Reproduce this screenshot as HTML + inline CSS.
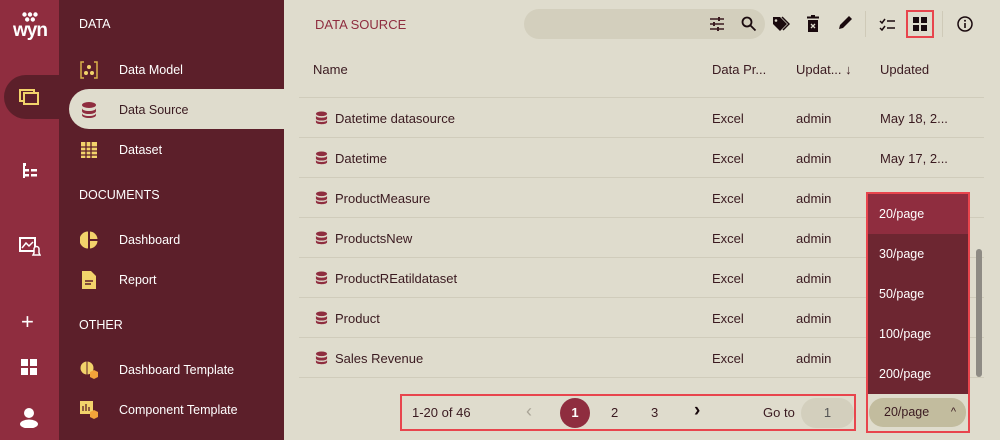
<!DOCTYPE html><html><head><style>
*{box-sizing:border-box;margin:0;padding:0}
body{width:1000px;height:440px;overflow:hidden;background:#dfdccd;font-family:"Liberation Sans",sans-serif;font-size:13px;color:#3a1a20;position:relative}
.abs{position:absolute}
.rail{left:0;top:0;width:59px;height:440px;background:#8f2d3f}
.side{left:59px;top:0;width:225px;height:440px;background:#5c1f2a;color:#fff}
.sec{position:absolute;left:20px;font-size:12.5px}
.it{position:absolute;left:60px;font-size:12.5px}
.ic{position:absolute;left:21px;width:18px;height:18px}
.row{position:absolute;left:299px;width:685px;height:40px;border-top:1px solid #d0ccbb}
.row span{position:absolute;top:13px}
.row svg{position:absolute;left:16px;top:13px}
.dd{position:absolute;left:868px;width:100px;color:#fff;font-size:12.5px;padding-left:11px;height:40px;line-height:40px}
</style></head><body>
<svg width="0" height="0" style="position:absolute"><defs><symbol id="db" viewBox="0 0 14 14"><ellipse cx="7" cy="2.5" rx="6" ry="2.5" fill="#8f2d3f"/><path d="M1 4.5c0 3 12 3 12 0v3c0 3-12 3-12 0zM1 9c0 3 12 3 12 0v2.5c0 3-12 3-12 0z" fill="#8f2d3f"/></symbol></defs></svg>
<div class="abs rail"></div>
<svg class="abs" style="left:22px;top:12px" width="16" height="10" fill="#fff"><circle cx="2.5" cy="2.5" r="2.2"/><circle cx="8" cy="2.5" r="2.2"/><circle cx="13.5" cy="2.5" r="2.2"/><circle cx="5.2" cy="7.5" r="2.2"/><circle cx="10.8" cy="7.5" r="2.2"/></svg>
<div class="abs" style="left:8px;top:20px;width:44px;color:#fff;font-weight:bold;font-size:19px;text-align:center;letter-spacing:-1px">wyn</div>
<div class="abs" style="left:4px;top:75px;width:60px;height:44px;background:#5c1f2a;border-radius:22px 0 0 22px"></div>
<svg class="abs" style="left:19px;top:89px" width="20" height="16"><rect x="1" y="1" width="14" height="11" fill="none" stroke="#f2d36b" stroke-width="2"/><rect x="5" y="4" width="14" height="11" fill="#5c1f2a" stroke="#f2d36b" stroke-width="2"/></svg>
<svg class="abs" style="left:23px;top:163px" width="14" height="15" fill="#fff"><rect x="0" y="0" width="3" height="3"/><rect x="0" y="0" width="2" height="15"/><rect x="0" y="6" width="6" height="2.5"/><rect x="0" y="11" width="6" height="2.5"/><rect x="8" y="6" width="6" height="2.5"/><rect x="8" y="11" width="6" height="2.5"/></svg>
<svg class="abs" style="left:19px;top:237px" width="22" height="20"><rect x="1" y="1" width="15" height="13" fill="none" stroke="#fff" stroke-width="2"/><path d="M3 11l4-5 3 3 4-4" stroke="#fff" fill="none" stroke-width="1.5"/><path d="M14 18h7l-1-2v-4a2.5 2.5 0 0 0-5 0v4z" fill="#8f2d3f" stroke="#fff" stroke-width="1.5"/></svg>
<div class="abs" style="left:21px;top:311px;color:#fff;font-size:22px;line-height:22px">+</div>
<svg class="abs" style="left:21px;top:359px" width="16" height="16" fill="#fff"><rect width="7" height="7"/><rect x="9" width="7" height="7"/><rect y="9" width="7" height="7"/><rect x="9" y="9" width="7" height="7"/></svg>
<svg class="abs" style="left:20px;top:407px" width="18" height="21" fill="#fff"><circle cx="9" cy="6" r="5"/><ellipse cx="9" cy="17" rx="9" ry="4.5"/></svg>

<div class="abs side">
<div class="sec" style="top:17px">DATA</div>
<svg class="ic" style="top:61px" viewBox="0 0 18 18"><path d="M4 1H1v16h3M14 1h3v16h-3" fill="none" stroke="#d9b24a" stroke-width="1.5"/><circle cx="9" cy="6" r="2" fill="#f2d36b"/><circle cx="6" cy="12" r="2" fill="#f2d36b"/><circle cx="12" cy="12" r="2" fill="#f2d36b"/></svg>
<div class="it" style="top:63px">Data Model</div>
<div class="abs" style="left:10px;top:89px;width:215px;height:40px;background:#dfdccd;border-radius:20px 0 0 20px"></div>
<svg class="ic" style="top:101px" viewBox="0 0 18 18" fill="#8f2d3f"><ellipse cx="9" cy="4" rx="7" ry="3"/><path d="M2 7c0 4 14 4 14 0v3c0 4-14 4-14 0zM2 12c0 4 14 4 14 0v2c0 4-14 4-14 0z"/></svg>
<div class="it" style="top:103px;color:#3a1a20">Data Source</div>
<svg class="ic" style="top:141px" viewBox="0 0 18 18"><rect x="1" y="1" width="16" height="16" fill="#f2d36b"/><path d="M1 6h16M1 10h16M1 14h16M6 1v16M11 1v16" stroke="#5c1f2a" stroke-width="1.3"/></svg>
<div class="it" style="top:143px">Dataset</div>
<div class="sec" style="top:188px">DOCUMENTS</div>
<svg class="ic" style="top:231px" viewBox="0 0 18 18" fill="#f2d36b"><path d="M8 0.5A8.5 8.5 0 0 0 8 17.5z"/><path d="M10 0.5A8 8 0 0 1 17.5 8H10zM10 10h7.5A8 8 0 0 1 10 17.5z"/></svg>
<div class="it" style="top:233px">Dashboard</div>
<svg class="ic" style="top:271px" viewBox="0 0 18 18"><path d="M2 0h9l5 5v13H2z" fill="#f2d36b"/><path d="M5 10h8M5 13h6" stroke="#5c1f2a" stroke-width="1.5"/></svg>
<div class="it" style="top:273px">Report</div>
<div class="sec" style="top:318px">OTHER</div>
<svg class="ic" style="top:361px" viewBox="0 0 18 18"><circle cx="7" cy="7" r="6.5" fill="#f2d36b"/><path d="M7 0v14" stroke="#5c1f2a"/><path d="M10 11l4-2 4 2v5l-4 2-4-2z" fill="#f2a33a"/></svg>
<div class="it" style="top:363px">Dashboard Template</div>
<svg class="ic" style="top:401px" viewBox="0 0 18 18"><rect x="0" y="0" width="13" height="13" fill="#f2d36b"/><path d="M3 10V5M6 10V3M9 10V6" stroke="#5c1f2a" stroke-width="1.3"/><path d="M10 11l4-2 4 2v5l-4 2-4-2z" fill="#f2a33a"/></svg>
<div class="it" style="top:403px">Component Template</div>
</div>

<div class="abs" style="left:315px;top:17px;color:#8f2d3f;font-size:13px">DATA SOURCE</div>
<div class="abs" style="left:524px;top:9px;width:241px;height:30px;background:#d3cfbd;border-radius:15px"></div>
<svg class="abs" style="left:709px;top:16px" width="16" height="16" stroke="#3a1a20" stroke-width="1.6"><path d="M1 3h14M1 8h14M1 13h14"/><path d="M10 1v4M5 6v4M9 11v4" stroke-width="2"/></svg>
<svg class="abs" style="left:741px;top:16px" width="16" height="16" fill="none" stroke="#1a0a0e" stroke-width="1.8"><circle cx="6" cy="6" r="4.5"/><path d="M9.5 9.5l5 5"/></svg>
<svg class="abs" style="left:772px;top:16px" width="18" height="16"><path d="M1 1h7l7 7-7 7-7-7z" fill="#1a0a0e"/><circle cx="4" cy="4.5" r="1.3" fill="#dfdccd"/><path d="M10 1l7 7-6 6" fill="none" stroke="#1a0a0e" stroke-width="1.5"/></svg>
<svg class="abs" style="left:807px;top:15px" width="12" height="17" fill="#1a0a0e"><rect x="0" y="1.5" width="12" height="2"/><rect x="4" y="0" width="4" height="2"/><path d="M1 5h10v12H1z"/><path d="M4 9l4 4M8 9l-4 4" stroke="#dfdccd" stroke-width="1.3"/></svg>
<svg class="abs" style="left:837px;top:15px" width="16" height="16"><path d="M2 14l1-4 9-9 3 3-9 9z" fill="#1a0a0e"/></svg>
<div class="abs" style="left:865px;top:11px;width:1px;height:26px;background:#cfcab8"></div>
<svg class="abs" style="left:879px;top:17px" width="16" height="14" stroke="#1a0a0e" stroke-width="1.5" fill="none"><path d="M1 4l2 2 3-4M8 4h8M1 11l2 2 3-4M8 11h8"/></svg>
<div class="abs" style="left:906px;top:10px;width:28px;height:28px;border:2px solid #e8454d"></div>
<svg class="abs" style="left:913px;top:17px" width="14" height="14" fill="#1a0a0e"><rect width="6" height="6"/><rect x="8" width="6" height="6"/><rect y="8" width="6" height="6"/><rect x="8" y="8" width="6" height="6"/></svg>
<div class="abs" style="left:942px;top:11px;width:1px;height:26px;background:#cfcab8"></div>
<svg class="abs" style="left:957px;top:16px" width="16" height="16"><circle cx="8" cy="8" r="7" fill="none" stroke="#1a0a0e" stroke-width="1.5"/><rect x="7.2" y="7" width="1.6" height="5" fill="#1a0a0e"/><circle cx="8" cy="4.7" r="1" fill="#1a0a0e"/></svg>

<div class="abs" style="left:313px;top:62px">Name</div>
<div class="abs" style="left:712px;top:62px">Data Pr...</div>
<div class="abs" style="left:796px;top:62px">Updat... ↓</div>
<div class="abs" style="left:880px;top:62px">Updated</div>

<div class="row" style="top:97px"><svg width="13" height="14"><use href="#db"/></svg><span style="left:36px">Datetime datasource</span><span style="left:413px">Excel</span><span style="left:497px">admin</span><span style="left:581px">May 18, 2...</span></div>
<div class="row" style="top:137px"><svg width="13" height="14"><use href="#db"/></svg><span style="left:36px">Datetime</span><span style="left:413px">Excel</span><span style="left:497px">admin</span><span style="left:581px">May 17, 2...</span></div>
<div class="row" style="top:177px"><svg width="13" height="14"><use href="#db"/></svg><span style="left:36px">ProductMeasure</span><span style="left:413px">Excel</span><span style="left:497px">admin</span></div>
<div class="row" style="top:217px"><svg width="13" height="14"><use href="#db"/></svg><span style="left:36px">ProductsNew</span><span style="left:413px">Excel</span><span style="left:497px">admin</span></div>
<div class="row" style="top:257px"><svg width="13" height="14"><use href="#db"/></svg><span style="left:36px">ProductREatildataset</span><span style="left:413px">Excel</span><span style="left:497px">admin</span></div>
<div class="row" style="top:297px"><svg width="13" height="14"><use href="#db"/></svg><span style="left:36px">Product</span><span style="left:413px">Excel</span><span style="left:497px">admin</span></div>
<div class="row" style="top:337px"><svg width="13" height="14"><use href="#db"/></svg><span style="left:36px">Sales Revenue</span><span style="left:413px">Excel</span><span style="left:497px">admin</span></div>
<div class="row" style="top:377px;height:1px"></div>

<div class="abs" style="left:976px;top:249px;width:6px;height:128px;background:#8e8b84;border-radius:3px"></div>

<div class="abs" style="left:866px;top:192px;width:104px;height:241px;border:2px solid #e8454d"></div>
<div class="dd" style="top:194px;background:#8f2d3f">20/page</div>
<div class="dd" style="top:234px;background:#6d2631">30/page</div>
<div class="dd" style="top:274px;background:#6d2631">50/page</div>
<div class="dd" style="top:314px;background:#6d2631">100/page</div>
<div class="dd" style="top:354px;background:#6d2631">200/page</div>
<div class="abs" style="left:869px;top:398px;width:97px;height:29px;background:#c2bc9e;border-radius:14px;font-size:12.5px;line-height:29px;padding-left:15px">20/page<span style="position:absolute;right:10px;font-size:11px">^</span></div>

<div class="abs" style="left:400px;top:394px;width:456px;height:37px;border:2px solid #e8454d"></div>
<div class="abs" style="left:412px;top:405px">1-20 of 46</div>
<div class="abs" style="left:526px;top:401px;color:#a9a496;font-size:18px">‹</div>
<div class="abs" style="left:560px;top:398px;width:30px;height:30px;border-radius:15px;background:#8f2d3f;color:#fff;font-weight:bold;text-align:center;line-height:30px">1</div>
<div class="abs" style="left:611px;top:405px">2</div>
<div class="abs" style="left:651px;top:405px">3</div>
<div class="abs" style="left:694px;top:400px;font-size:19px;font-weight:bold;color:#1a0a0e">›</div>
<div class="abs" style="left:763px;top:405px">Go to</div>
<div class="abs" style="left:801px;top:398px;width:53px;height:30px;border-radius:15px;background:#d3cfbd;text-align:center;line-height:30px;color:#555">1</div>
</body></html>
